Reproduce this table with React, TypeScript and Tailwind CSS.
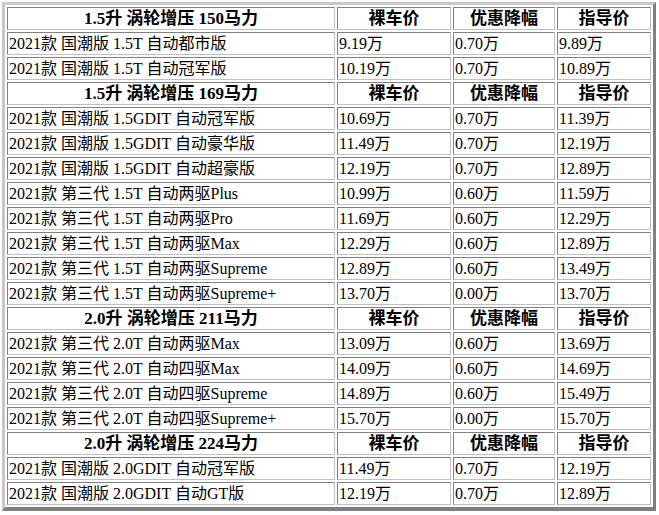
import { Fragment } from "react";

const groups = [
  {
    title: "1.5升 涡轮增压 150马力",
    rows: [
      ["2021款 国潮版 1.5T 自动都市版", "9.19万", "0.70万", "9.89万"],
      ["2021款 国潮版 1.5T 自动冠军版", "10.19万", "0.70万", "10.89万"],
    ],
  },
  {
    title: "1.5升 涡轮增压 169马力",
    rows: [
      ["2021款 国潮版 1.5GDIT 自动冠军版", "10.69万", "0.70万", "11.39万"],
      ["2021款 国潮版 1.5GDIT 自动豪华版", "11.49万", "0.70万", "12.19万"],
      ["2021款 国潮版 1.5GDIT 自动超豪版", "12.19万", "0.70万", "12.89万"],
      ["2021款 第三代 1.5T 自动两驱Plus", "10.99万", "0.60万", "11.59万"],
      ["2021款 第三代 1.5T 自动两驱Pro", "11.69万", "0.60万", "12.29万"],
      ["2021款 第三代 1.5T 自动两驱Max", "12.29万", "0.60万", "12.89万"],
      ["2021款 第三代 1.5T 自动两驱Supreme", "12.89万", "0.60万", "13.49万"],
      ["2021款 第三代 1.5T 自动两驱Supreme+", "13.70万", "0.00万", "13.70万"],
    ],
  },
  {
    title: "2.0升 涡轮增压 211马力",
    rows: [
      ["2021款 第三代 2.0T 自动两驱Max", "13.09万", "0.60万", "13.69万"],
      ["2021款 第三代 2.0T 自动四驱Max", "14.09万", "0.60万", "14.69万"],
      ["2021款 第三代 2.0T 自动四驱Supreme", "14.89万", "0.60万", "15.49万"],
      ["2021款 第三代 2.0T 自动四驱Supreme+", "15.70万", "0.00万", "15.70万"],
    ],
  },
  {
    title: "2.0升 涡轮增压 224马力",
    rows: [
      ["2021款 国潮版 2.0GDIT 自动冠军版", "11.49万", "0.70万", "12.19万"],
      ["2021款 国潮版 2.0GDIT 自动GT版", "12.19万", "0.70万", "12.89万"],
    ],
  },
];

const cell =
  "border border-t-[#808080] border-l-[#808080] border-r-[#c0c0c0] border-b-[#c0c0c0] px-px h-[23px] leading-[19px] whitespace-nowrap";

export default function App() {
  return (
    <div className="bg-white p-[2px] text-black" style={{ fontFamily: '"Liberation Serif", "Noto Sans CJK SC", serif' }}>
      <table className="table-fixed w-[654px] border-separate border-spacing-[2px] border-[3px] border-t-[#c8c8c8] border-l-[#c8c8c8] border-r-[#808080] border-b-[#808080] border-b-4">
        <colgroup>
          <col className="w-[328px]" />
          <col className="w-[114px]" />
          <col className="w-[102px]" />
          <col className="w-[94px]" />
        </colgroup>
        <tbody>
          {groups.map((g) => (
            <Fragment key={g.title}>
              <tr>
                <th className={`${cell} text-center font-bold text-[17px]`}>{g.title}</th>
                <th className={`${cell} text-center font-bold text-[17px]`}>裸车价</th>
                <th className={`${cell} text-center font-bold text-[17px]`}>优惠降幅</th>
                <th className={`${cell} text-center font-bold text-[17px]`}>指导价</th>
              </tr>
              {g.rows.map((r) => (
                <tr key={r[0]}>
                  {r.map((v, i) => (
                    <td key={i} className={`${cell} text-left text-[16px] font-normal`}>
                      {v}
                    </td>
                  ))}
                </tr>
              ))}
            </Fragment>
          ))}
        </tbody>
      </table>
    </div>
  );
}
